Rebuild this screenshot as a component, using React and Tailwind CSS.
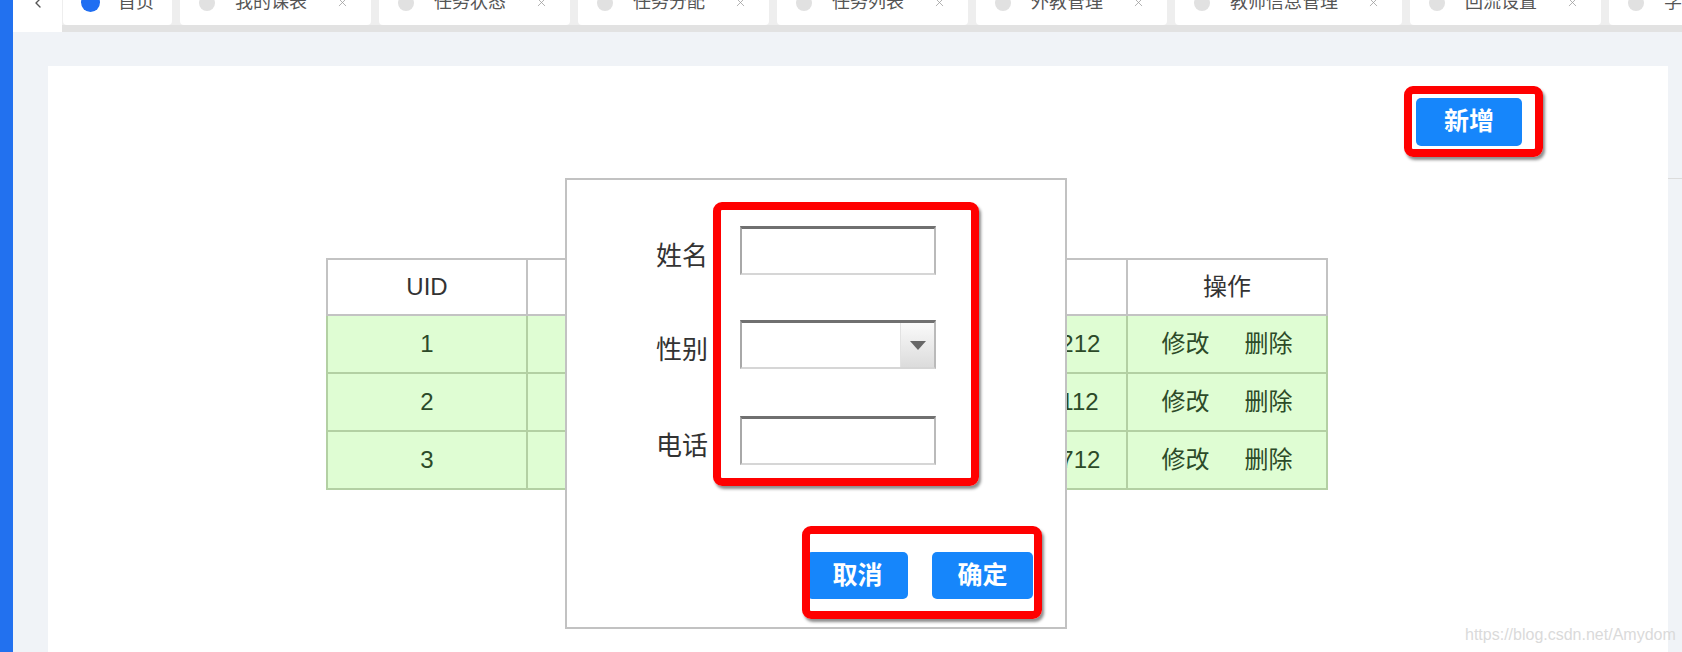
import { ChevronLeft, X } from "lucide-react";

const tabs = [
  { name: "首页", active: true },
  { name: "我的课表" },
  { name: "任务状态" },
  { name: "任务分配" },
  { name: "任务列表" },
  { name: "外教管理" },
  { name: "教师信息管理" },
  { name: "回流设置" },
  { name: "学生管理" },
];

const rows = [
  { uid: 1, name: "张三", sex: "男", phone: "13800001212" },
  { uid: 2, name: "李四", sex: "女", phone: "13800001112" },
  { uid: 3, name: "王五", sex: "男", phone: "13800001712" },
];

const inputCls =
  "block w-[196px] h-[49px] border-2 border-t-[3px] border-t-[#707070] border-l-[#a8a8a8] border-r-[#bababa] border-b-[#d6d6d6] bg-white outline-none";

const labelCls = "w-[56px] translate-y-[5px] text-right text-[26px] text-[#333] leading-[36px]";

function Tab({ name, active }) {
  if (active) {
    return (
      <div className="shrink-0 h-[45px] -mt-[20px] flex items-center bg-white rounded-b-[4px] pl-[18px] pr-[18px]">
        <span className="w-[19px] h-[19px] rounded-full bg-[#1f6ef2]" />
        <span className="ml-[18px] text-[18px] text-[#555]">{name}</span>
      </div>
    );
  }
  return (
    <div className="shrink-0 h-[45px] -mt-[20px] flex items-center bg-white rounded-b-[4px] pl-[19px] pr-[22px]">
      <span className="w-[16px] h-[16px] rounded-full bg-[#e1e1e1]" />
      <span className="ml-[20px] text-[18px] text-[#555] whitespace-nowrap">{name}</span>
      <X size={13} strokeWidth={1.4} className="ml-[29px] text-[#9a9a9a]" />
    </div>
  );
}

function RedBox({ className }) {
  return (
    <div
      className={
        "absolute border-[8px] border-[#ff0000] rounded-[9px] shadow-[2px_3px_3px_rgba(0,0,0,0.45)] pointer-events-none " +
        className
      }
    />
  );
}

export default function App() {
  return (
    <div className="relative w-[1682px] h-[652px] overflow-hidden flex bg-[#f0f3f7] font-['Liberation_Sans','Noto_Sans_CJK_SC',sans-serif]">
      <div className="w-[13px] h-full bg-[#2271ef] shrink-0" />

      <div className="flex-1 flex flex-col min-w-0">
        {/* tab bar */}
        <div className="flex h-[32px] shrink-0">
          <div className="w-[49px] h-[32px] bg-white overflow-hidden shrink-0">
            <div className="h-[45px] -mt-[20px] flex items-center justify-center">
              <ChevronLeft size={16} strokeWidth={2} className="text-[#555]" />
            </div>
          </div>
          <div className="flex-1 flex flex-col min-w-0">
            <div className="h-[25px] bg-[#eeeeee] flex gap-[8px] pl-[1px] overflow-hidden">
              {tabs.map((t) => (
                <Tab key={t.name} {...t} />
              ))}
            </div>
            <div className="h-[7px] bg-[#e2e2e2]" />
          </div>
        </div>

        {/* content */}
        <div className="flex-1 pl-[35px] pr-[14px] pt-[34px]">
          <div className="relative h-[600px] bg-white">
            <div className="flex justify-end pt-[32px] pr-[146px]">
              <button className="w-[106px] h-[48px] rounded-[5px] bg-[#1686fb] text-white text-[25px] font-bold">
                新增
              </button>
            </div>

            <table className="mt-[112px] ml-[278px] w-[1002px] table-fixed border-collapse text-[24px]">
              <thead>
                <tr className="h-[56px] bg-white text-[#333]">
                  {["UID", "姓名", "性别", "电话", "操作"].map((h) => (
                    <th key={h} className="border-2 border-[#c3c3c3] font-normal">
                      {h}
                    </th>
                  ))}
                </tr>
              </thead>
              <tbody>
                {rows.map((r) => (
                  <tr key={r.uid} className="h-[58px] bg-[#dffdd3] text-[#2c4a28]">
                    <td className="border-2 border-[#b3d0a3] text-center">{r.uid}</td>
                    <td className="border-2 border-[#b3d0a3] text-center">{r.name}</td>
                    <td className="border-2 border-[#b3d0a3] text-center">{r.sex}</td>
                    <td className="border-2 border-[#b3d0a3] text-center">{r.phone}</td>
                    <td className="border-2 border-[#b3d0a3] text-center">
                      <span className="inline-flex gap-[35px]">
                        <span>修改</span>
                        <span>删除</span>
                      </span>
                    </td>
                  </tr>
                ))}
              </tbody>
            </table>

            {/* dialog */}
            <div className="absolute left-[517px] top-[112px] w-[502px] h-[451px] border-2 border-[#c2c2c2] bg-white">
              <div className="pt-[46px] pl-[85px]">
                <div className="flex items-center">
                  <label className={labelCls}>姓名</label>
                  <input className={"ml-[32px] " + inputCls} />
                </div>
                <div className="flex items-center mt-[45px]">
                  <label className={labelCls}>性别</label>
                  <div className={"ml-[32px] flex justify-end " + inputCls}>
                    <div className="w-[34px] h-full border-l border-[#e2e2e2] bg-gradient-to-b from-[#fafafa] to-[#dcdcdc] flex items-center justify-center">
                      <svg width="16" height="9" viewBox="0 0 16 9">
                        <polygon points="0,0 16,0 8,9" fill="#676767" />
                      </svg>
                    </div>
                  </div>
                </div>
                <div className="flex items-center mt-[47px]">
                  <label className={labelCls}>电话</label>
                  <input className={"ml-[32px] " + inputCls} />
                </div>
              </div>

              <div className="flex justify-end gap-[24px] pr-[32px] mt-[87px]">
                <button className="w-[101px] h-[47px] rounded-[5px] bg-[#1686fb] text-white text-[25px] font-bold">
                  取消
                </button>
                <button className="w-[101px] h-[47px] rounded-[5px] bg-[#1686fb] text-white text-[25px] font-bold">
                  确定
                </button>
              </div>

              <RedBox className="left-[146px] top-[22px] w-[266px] h-[284px]" />
              <RedBox className="left-[235px] top-[346px] w-[240px] h-[93px]" />
            </div>

            <RedBox className="left-[1356px] top-[20px] w-[139px] h-[71px]" />
          </div>
        </div>
      </div>

      <div className="absolute left-[1668px] top-[178px] w-[14px] h-px bg-[#dcdcdc]" />

      <div className="absolute left-[1465px] top-[626px] text-[16px] leading-[18px] text-[#dadada] whitespace-nowrap">
        https://blog.csdn.net/Amydom
      </div>
    </div>
  );
}
